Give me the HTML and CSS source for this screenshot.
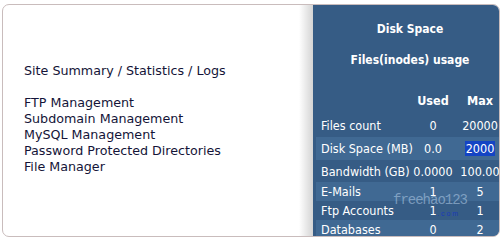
FILE: index.html
```html
<!DOCTYPE html>
<html>
<head>
  <title>Account Overview</title>
  <link rel="stylesheet" href="styles.css">
</head>
<body>
  <div class="frame">
    <div class="menu">
      <a href="#">Site Summary / Statistics / Logs</a><br><br>
      <a href="#">FTP Management</a><br>
      <a href="#">Subdomain Management</a><br>
      <a href="#">MySQL Management</a><br>
      <a href="#">Password Protected Directories</a><br>
      <a href="#">File Manager</a>
    </div>
    <div class="shade"></div>
    <div class="stats">
      <table class="usage">
        <colgroup><col class="c-label"><col class="c-used"><col class="c-max"></colgroup>
        <tr class="title first"><th colspan="3">Disk Space</th></tr>
        <tr class="title"><th colspan="3">Files(inodes) usage</th></tr>
        <tr class="head"><td></td><th>Used</th><th>Max</th></tr>
        <tr class="tall"><td class="label">Files count</td><td>0</td><td>20000</td></tr>
        <tr class="tall alt"><td class="label">Disk Space (MB)</td><td>0.0</td><td><span class="picked">2000</span></td></tr>
        <tr class="mid"><td class="label">Bandwidth (GB)</td><td>0.0000</td><td>100.00</td></tr>
        <tr class="alt"><td class="label">E-Mails</td><td>1</td><td>5</td></tr>
        <tr><td class="label">Ftp Accounts</td><td>1</td><td>1</td></tr>
        <tr class="alt"><td class="label">Databases</td><td>0</td><td>2</td></tr>
      </table>
      <div class="mark">freehao123</div>
      <div class="mark-dom">.com</div>
    </div>
  </div>
</body>
</html>
```

FILE: styles.css
```css
body { margin: 0; background: #fff; font-family: "DejaVu Sans", sans-serif; }
.frame { display: flex; width: 496px; height: 231px; margin: 4px 0 0 2px; border: 1px solid #c9bcbc; border-radius: 7px; overflow: hidden; }
.menu { flex: 1; padding: 58px 0 0 21px; font-size: 12.7px; line-height: 16px; }
.menu a { color: #141438; text-decoration: none; }
.shade { width: 14px; background: linear-gradient(to right, #fff, #d4d4d4); }
.stats { position: relative; width: 186px; background: #365c85; overflow: hidden; border-top-right-radius: 4px; }
.usage { width: 188px; margin: 4px 0 0 3px; border-collapse: collapse; table-layout: fixed; color: #fff; font-family: "DejaVu Sans Condensed", "Liberation Sans", sans-serif; font-size: 12.5px; }
.c-label { width: 94px; }
.c-used { width: 46px; }
.c-max { width: 48px; }
.usage td, .usage th { padding: 0; text-align: center; white-space: nowrap; line-height: 15px; }
.usage td.label { padding-left: 5px; text-align: left; }
.usage tr.title th { font-size: 12px; }
.usage tr.first { height: 38px; }
.usage tr.first th { padding-top: 6px; }
.usage tr.title { height: 34px; }
.usage tr.head { height: 37px; }
.usage tr.head th { padding-top: 9px; }
.usage tr { height: 19px; }
.usage tr.tall { height: 23px; }
.usage tr.mid { height: 22px; }
.usage tr.alt { background: #406993; }
.picked { background: #1444c4; padding: 0 1px; }
.mark { position: absolute; left: 80px; top: 187px; font-family: "Liberation Mono", monospace; font-size: 14px; letter-spacing: -1px; color: rgba(190, 215, 240, 0.5); }
.mark-dom { position: absolute; left: 124px; top: 205px; font-family: "Liberation Sans", sans-serif; font-size: 7px; letter-spacing: 2px; color: #1a3ab8; }
```
